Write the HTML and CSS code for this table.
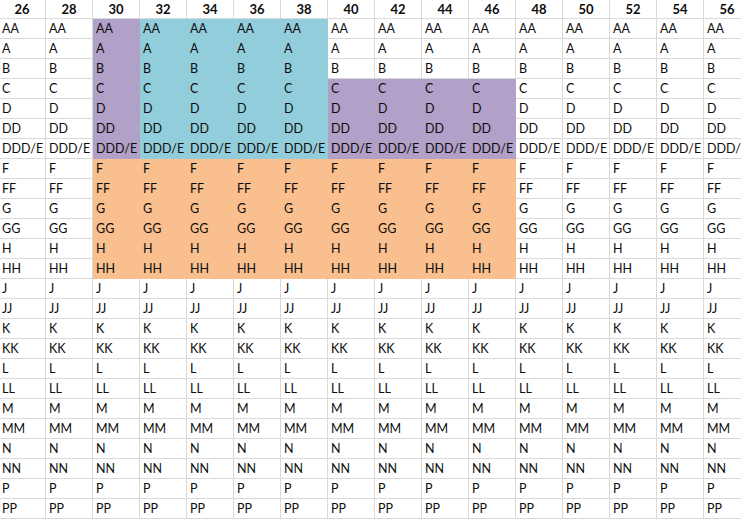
FILE: index.html
```html
<!DOCTYPE html>
<html lang="en">
<head>
<meta charset="utf-8">
<title>Size chart</title>
<link rel="stylesheet" href="styles.css">
</head>
<body>
<table class="sheet" id="sheet">
  <colgroup id="cols"></colgroup>
  <thead><tr class="head" id="head"></tr></thead>
  <tbody id="body"></tbody>
</table>
<script src="script.js"></script>
</body>
</html>
```

FILE: styles.css
```css
html, body {
  margin: 0;
  padding: 0;
  background: #ffffff;
  overflow: hidden;
}

.sheet {
  border-collapse: separate;
  border-spacing: 0;
  table-layout: fixed;
  width: 752px;
  margin-left: -1px;
  font-family: Lato, "Liberation Sans", sans-serif;
  font-size: 12.5px;
  color: #0d0d0d;
}

.sheet col {
  width: 47px;
}

.sheet th,
.sheet td {
  border-right: 1px solid #d9d9d9;
  border-bottom: 1px solid #d9d9d9;
  padding: 0;
  overflow: hidden;
  white-space: nowrap;
}

.sheet th {
  height: 18px;
  line-height: 18px;
  font-size: 13px;
  font-weight: 700;
  text-align: center;
}

.sheet td {
  height: 18px;
  line-height: 18px;
  padding: 1px 0 0 3px;
  text-align: left;
}

.sheet td.purple {
  background: #b1a0c7;
  border-color: #b1a0c7;
}

.sheet td.blue {
  background: #92cddc;
  border-color: #92cddc;
}

.sheet td.orange {
  background: #fabf8f;
  border-color: #fabf8f;
}
```

FILE: script.js
```js
(function () {
  var sizes = [26, 28, 30, 32, 34, 36, 38, 40, 42, 44, 46, 48, 50, 52, 54, 56];
  var cups = ["AA", "A", "B", "C", "D", "DD", "DDD/E", "F", "FF", "G", "GG", "H", "HH",
              "J", "JJ", "K", "KK", "L", "LL", "M", "MM", "N", "NN", "P", "PP"];

  function fill(r, c) {
    if (r <= 6) {
      if (c === 2) return "purple";
      if (c >= 3 && c <= 6) return "blue";
      if (c >= 7 && c <= 10 && r >= 3) return "purple";
      return "";
    }
    if (r >= 7 && r <= 12 && c >= 2 && c <= 10) return "orange";
    return "";
  }

  var cols = document.getElementById("cols");
  var head = document.getElementById("head");
  var body = document.getElementById("body");

  sizes.forEach(function (s) {
    cols.appendChild(document.createElement("col"));
    var th = document.createElement("th");
    th.textContent = s;
    head.appendChild(th);
  });

  cups.forEach(function (cup, r) {
    var tr = document.createElement("tr");
    sizes.forEach(function (s, c) {
      var td = document.createElement("td");
      td.textContent = cup;
      var f = fill(r, c);
      if (f) td.className = f;
      tr.appendChild(td);
    });
    body.appendChild(tr);
  });
})();
```
